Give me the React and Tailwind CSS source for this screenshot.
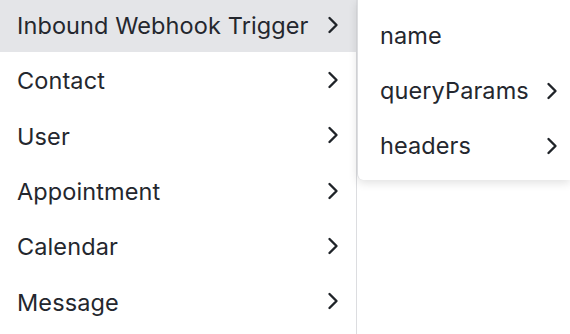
import React from 'react';

const mainItems = [
  { label: 'Inbound Webhook Trigger', active: true },
  { label: 'Contact' },
  { label: 'User' },
  { label: 'Appointment' },
  { label: 'Calendar' },
  { label: 'Message' },
];

const subItems = [
  { label: 'name', nested: false },
  { label: 'queryParams', nested: true },
  { label: 'headers', nested: true },
];

const Chevron = () => (
  <svg width="12" height="18" viewBox="0 0 12 18" fill="none" className="shrink-0">
    <path d="M2.5 2 L9.5 9 L2.5 16" stroke="#1f2328" strokeWidth="2.4" strokeLinecap="round" strokeLinejoin="round" />
  </svg>
);

const App = () => {
  return (
    <div className="relative w-[570px] h-[334px] overflow-hidden bg-white text-[#24272e] font-['Inter','Liberation_Sans',sans-serif] text-[23.5px] tracking-[0.1px]">
      {/* Main menu */}
      <div className="w-[357px] h-[340px] border-r border-[#dcdde0] -mt-[3px]">
        {mainItems.map((item) => (
          <div
            key={item.label}
            className={`flex items-center justify-between h-[55.3px] pl-[17px] pr-[17px] ${item.active ? 'bg-[#e4e5e8]' : ''}`}
          >
            <span className="pt-[2px]">{item.label}</span>
            <Chevron />
          </div>
        ))}
      </div>

      {/* Flyout submenu */}
      <div className="absolute left-[357px] top-0 w-[213px] h-[180px] bg-white rounded-bl-md border-l border-[#dcdde0] shadow-[0_3px_10px_rgba(0,0,0,0.12)] pt-[8px]">
        {subItems.map((item) => (
          <div key={item.label} className="flex items-center h-[55px] pl-[22px] pr-[12px]">
            <span className="flex-1 pt-[1px]">{item.label}</span>
            {item.nested && <Chevron />}
          </div>
        ))}
      </div>
    </div>
  );
};

export default App;
